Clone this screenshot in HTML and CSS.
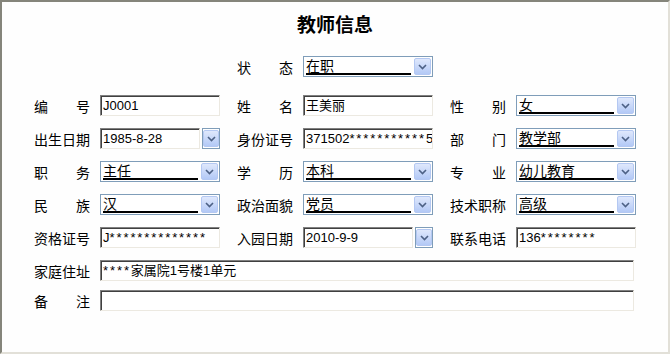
FILE: index.html
```html
<!DOCTYPE html>
<html lang="zh-CN">

<head>
    <meta charset="UTF-8">
    <title>教师信息</title>
    <link rel="stylesheet" href="styles.css">
</head>

<body>
    <div class="frame">
        <h1>教师信息</h1>

        <!-- 状态 -->
        <div class="grid status-row">
            <div class="field col2">
                <label>状 态</label>
                <div class="combo w130"><span class="value">在职</span><span class="btn"><svg viewBox="0 0 9 6" width="9" height="6"><path d="M1 1 L4.5 4.5 L8 1" fill="none" stroke="#4d6185" stroke-width="1.6"/></svg></span></div>
            </div>
        </div>

        <div class="grid">
            <div class="field">
                <label>编 号</label>
                <div class="text w120">J0001</div>
            </div>
            <div class="field">
                <label>姓 名</label>
                <div class="text w130">王美丽</div>
            </div>
            <div class="field">
                <label>性 别</label>
                <div class="combo w120"><span class="value">女</span><span class="btn"><svg viewBox="0 0 9 6" width="9" height="6"><path d="M1 1 L4.5 4.5 L8 1" fill="none" stroke="#4d6185" stroke-width="1.6"/></svg></span></div>
            </div>

            <div class="field">
                <label>出生日期</label>
                <div class="date w120">
                    <div class="text">1985-8-28</div>
                    <span class="dbtn"><span class="btn"><svg viewBox="0 0 9 6" width="9" height="6"><path d="M1 1 L4.5 4.5 L8 1" fill="none" stroke="#4d6185" stroke-width="1.6"/></svg></span></span>
                </div>
            </div>
            <div class="field">
                <label>身份证号</label>
                <div class="text w130">371502<span class="stars">***********</span>5</div>
            </div>
            <div class="field">
                <label>部 门</label>
                <div class="combo w120"><span class="value">教学部</span><span class="btn"><svg viewBox="0 0 9 6" width="9" height="6"><path d="M1 1 L4.5 4.5 L8 1" fill="none" stroke="#4d6185" stroke-width="1.6"/></svg></span></div>
            </div>

            <div class="field">
                <label>职 务</label>
                <div class="combo w120"><span class="value">主任</span><span class="btn"><svg viewBox="0 0 9 6" width="9" height="6"><path d="M1 1 L4.5 4.5 L8 1" fill="none" stroke="#4d6185" stroke-width="1.6"/></svg></span></div>
            </div>
            <div class="field">
                <label>学 历</label>
                <div class="combo w130"><span class="value">本科</span><span class="btn"><svg viewBox="0 0 9 6" width="9" height="6"><path d="M1 1 L4.5 4.5 L8 1" fill="none" stroke="#4d6185" stroke-width="1.6"/></svg></span></div>
            </div>
            <div class="field">
                <label>专 业</label>
                <div class="combo w120"><span class="value">幼儿教育</span><span class="btn"><svg viewBox="0 0 9 6" width="9" height="6"><path d="M1 1 L4.5 4.5 L8 1" fill="none" stroke="#4d6185" stroke-width="1.6"/></svg></span></div>
            </div>

            <div class="field">
                <label>民 族</label>
                <div class="combo w120"><span class="value">汉</span><span class="btn"><svg viewBox="0 0 9 6" width="9" height="6"><path d="M1 1 L4.5 4.5 L8 1" fill="none" stroke="#4d6185" stroke-width="1.6"/></svg></span></div>
            </div>
            <div class="field">
                <label>政治面貌</label>
                <div class="combo w130"><span class="value">党员</span><span class="btn"><svg viewBox="0 0 9 6" width="9" height="6"><path d="M1 1 L4.5 4.5 L8 1" fill="none" stroke="#4d6185" stroke-width="1.6"/></svg></span></div>
            </div>
            <div class="field">
                <label>技术职称</label>
                <div class="combo w120"><span class="value">高级</span><span class="btn"><svg viewBox="0 0 9 6" width="9" height="6"><path d="M1 1 L4.5 4.5 L8 1" fill="none" stroke="#4d6185" stroke-width="1.6"/></svg></span></div>
            </div>

            <div class="field">
                <label>资格证号</label>
                <div class="text w120">J<span class="stars">**************</span></div>
            </div>
            <div class="field">
                <label>入园日期</label>
                <div class="date w130">
                    <div class="text">2010-9-9</div>
                    <span class="dbtn"><span class="btn"><svg viewBox="0 0 9 6" width="9" height="6"><path d="M1 1 L4.5 4.5 L8 1" fill="none" stroke="#4d6185" stroke-width="1.6"/></svg></span></span>
                </div>
            </div>
            <div class="field">
                <label>联系电话</label>
                <div class="text w120">136<span class="stars">********</span></div>
            </div>
        </div>

        <!-- 整行字段 -->
        <div class="wide">
            <div class="field">
                <label>家庭住址</label>
                <div class="text grow"><span class="stars">****</span>家属院1号楼1单元</div>
            </div>
            <div class="field">
                <label>备 注</label>
                <div class="text grow"></div>
            </div>
        </div>
    </div>
</body>

</html>
```

FILE: styles.css
```css
body {
    margin: 0;
    background-color: #ffffff;
    font-family: "Noto Sans CJK SC", "Liberation Sans", sans-serif;
    color: #000;
}

.frame {
    width: 670px;
    height: 354px;
    box-sizing: border-box;
    border-top: 2px solid #85857b;
    border-left: 2px solid #85857b;
    border-right: 2px solid #e2e0d8;
    border-bottom: 2px solid #e2e0d8;
    background-color: #fefefe;
}

h1 {
    margin: 0;
    padding-top: 9px;
    height: 25px;
    line-height: 25px;
    text-align: center;
    font-size: 19px;
    font-weight: bold;
}

.grid {
    display: grid;
    grid-template-columns: 186px 196px 186px;
    column-gap: 17px;
    row-gap: 12px;
    padding-left: 32px;
    margin-top: 18px;
}

.status-row {
    margin-top: 20px;
}

.col2 {
    grid-column: 2;
}

.field {
    display: flex;
    align-items: center;
    height: 21px;
}

.field label {
    width: 56px;
    margin-right: 10px;
    font-size: 14px;
    line-height: 16px;
    text-align: justify;
    text-align-last: justify;
    flex-shrink: 0;
}

.w120 {
    width: 120px;
}

.w130 {
    width: 130px;
}

.grow {
    flex: 1;
}

/* 文本框：凹陷边框 */
.text {
    height: 21px;
    box-sizing: border-box;
    padding: 0 2px;
    border: 1px solid;
    border-color: #808080 #ece9e1 #ece9e1 #808080;
    box-shadow: inset 1px 1px 0 #404040;
    background-color: #fff;
    font-family: "Liberation Sans", "Noto Sans CJK SC", sans-serif;
    font-size: 13px;
    line-height: 19px;
    white-space: nowrap;
    overflow: hidden;
}

.stars {
    letter-spacing: 1.9px;
}

/* 下拉框 */
.combo {
    height: 21px;
    box-sizing: border-box;
    border: 1px solid #7f9db9;
    background-color: #fff;
    display: flex;
    align-items: flex-end;
}

.combo .value {
    flex: 1;
    margin: 0 2px 1px 2px;
    height: 16px;
    border-bottom: 2px solid #000;
    font-size: 14px;
    line-height: 16px;
    white-space: nowrap;
}

.btn {
    width: 17px;
    height: 17px;
    margin: 1px;
    box-sizing: border-box;
    border: 1px solid #b4c8f2;
    border-radius: 2px;
    background: linear-gradient(#dfe8fc, #b3c9f6);
    display: flex;
    align-items: center;
    justify-content: center;
    align-self: center;
}

/* 日期框：文本框加独立的下拉按钮 */
.date {
    display: flex;
    align-items: center;
}

.date .text {
    flex: 1;
    margin-right: 2px;
}

.dbtn {
    width: 18px;
    height: 21px;
    box-sizing: border-box;
    border: 1px solid #7f9db9;
    background-color: #fff;
    display: flex;
    align-items: center;
    justify-content: center;
    flex-shrink: 0;
}

.dbtn .btn {
    width: 16px;
    height: 17px;
    margin: 0;
}

.wide {
    display: flex;
    flex-direction: column;
    gap: 9px;
    margin-top: 12px;
    padding-left: 32px;
    padding-right: 34px;
}
```
